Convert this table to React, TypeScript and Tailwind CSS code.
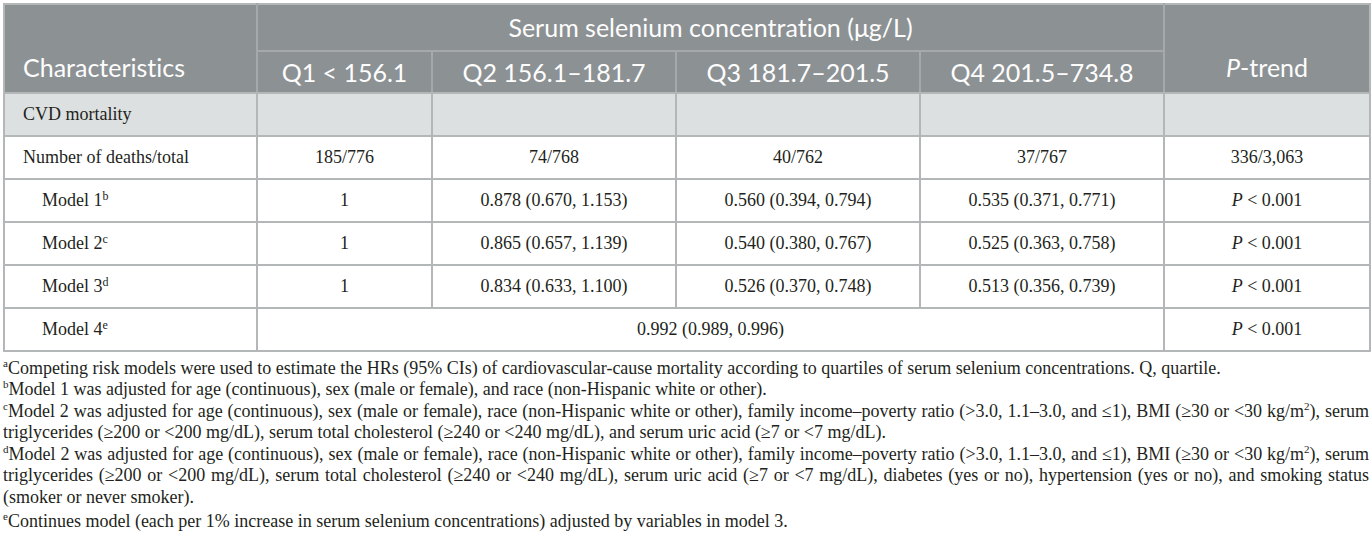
import React from 'react';

const cols = ['Q1 < 156.1', 'Q2 156.1–181.7', 'Q3 181.7–201.5', 'Q4 201.5–734.8'];

const rows = [
  { label: 'Model 1', sup: 'b', vals: ['1', '0.878 (0.670, 1.153)', '0.560 (0.394, 0.794)', '0.535 (0.371, 0.771)'] },
  { label: 'Model 2', sup: 'c', vals: ['1', '0.865 (0.657, 1.139)', '0.540 (0.380, 0.767)', '0.525 (0.363, 0.758)'] },
  { label: 'Model 3', sup: 'd', vals: ['1', '0.834 (0.633, 1.100)', '0.526 (0.370, 0.748)', '0.513 (0.356, 0.739)'] },
];

const td = 'border-2 border-[#b4b7b8] h-[43px] text-center align-middle';
const fsup = 'text-[11px] leading-none align-top';

function PLess() {
  return (
    <span>
      <i>P</i> &lt; 0.001
    </span>
  );
}

function Note({ s, children }: { s: string; children: React.ReactNode }) {
  return (
    <p className="text-justify">
      <span className={fsup}>{s}</span>
      {children}
    </p>
  );
}

export default function App() {
  return (
    <div className="bg-white w-[1372px] h-[553px] pt-[3px] pl-[3px] text-[#231f20] font-['Liberation_Serif',serif]">
      <table className="w-[1366px] border-collapse table-fixed text-[18px]">
        <colgroup>
          <col className="w-[253px]" />
          <col className="w-[175px]" />
          <col className="w-[244px]" />
          <col className="w-[244px]" />
          <col className="w-[244px]" />
          <col className="w-[206px]" />
        </colgroup>
        <thead className="bg-[#8c9194] text-[#fdfdfd] font-['Lato',sans-serif] text-[25px] [font-variant-ligatures:none]">
          <tr className="h-[47px]">
            <th rowSpan={2} className="border-2 border-[#b4b7b8] border-r-[#a5a9ab] font-normal text-left align-bottom pl-[18px] pb-[5px]">
              Characteristics
            </th>
            <th colSpan={4} className="border-2 border-[#b4b7b8] border-b-[#a5a9ab] border-x-[#a5a9ab] font-normal align-middle">
              Serum selenium concentration (μg/L)
            </th>
            <th rowSpan={2} className="border-2 border-[#b4b7b8] border-l-[#a5a9ab] font-normal align-bottom pb-[5px]">
              <i>P</i>-trend
            </th>
          </tr>
          <tr className="h-[41px]">
            {cols.map((c) => (
              <th key={c} className="border-2 border-[#a5a9ab] border-b-[#b4b7b8] font-normal align-middle pt-[2px]">
                {c}
              </th>
            ))}
          </tr>
        </thead>
        <tbody>
          <tr className="bg-[#dde0e1]">
            <td className={td + ' text-left pl-[18px] h-[42px]'}>CVD mortality</td>
            <td className={td} />
            <td className={td} />
            <td className={td} />
            <td className={td} />
            <td className={td} />
          </tr>
          <tr>
            <td className={td + ' text-left pl-[18px]'}>Number of deaths/total</td>
            <td className={td}>185/776</td>
            <td className={td}>74/768</td>
            <td className={td}>40/762</td>
            <td className={td}>37/767</td>
            <td className={td}>336/3,063</td>
          </tr>
          {rows.map((r) => (
            <tr key={r.label}>
              <td className={td + ' text-left pl-[37px]'}>
                {r.label}
                <sup className="text-[12px]">{r.sup}</sup>
              </td>
              {r.vals.map((v, i) => (
                <td key={i} className={td}>
                  {v}
                </td>
              ))}
              <td className={td}>
                <PLess />
              </td>
            </tr>
          ))}
          <tr>
            <td className={td + ' text-left pl-[37px] h-[42px]'}>
              Model 4<sup className="text-[12px]">e</sup>
            </td>
            <td colSpan={4} className={td + ' h-[42px]'}>
              0.992 (0.989, 0.996)
            </td>
            <td className={td + ' h-[42px]'}>
              <PLess />
            </td>
          </tr>
        </tbody>
      </table>
      <div className="w-[1366px] mt-[6px] text-[18px] leading-[21.6px]">
        <Note s="a">
          Competing risk models were used to estimate the HRs (95% CIs) of cardiovascular-cause mortality according to quartiles of serum selenium concentrations. Q, quartile.
        </Note>
        <Note s="b">
          Model 1 was adjusted for age (continuous), sex (male or female), and race (non-Hispanic white or other).
        </Note>
        <Note s="c">
          Model 2 was adjusted for age (continuous), sex (male or female), race (non-Hispanic white or other), family income–poverty ratio (&gt;3.0, 1.1–3.0, and ≤1), BMI (≥30 or &lt;30 kg/m<span className={fsup}>2</span>), serum triglycerides (≥200 or &lt;200 mg/dL), serum total cholesterol (≥240 or &lt;240 mg/dL), and serum uric acid (≥7 or &lt;7 mg/dL).
        </Note>
        <Note s="d">
          Model 2 was adjusted for age (continuous), sex (male or female), race (non-Hispanic white or other), family income–poverty ratio (&gt;3.0, 1.1–3.0, and ≤1), BMI (≥30 or &lt;30 kg/m<span className={fsup}>2</span>), serum triglycerides (≥200 or &lt;200 mg/dL), serum total cholesterol (≥240 or &lt;240 mg/dL), serum uric acid (≥7 or &lt;7 mg/dL), diabetes (yes or no), hypertension (yes or no), and smoking status (smoker or never smoker).
        </Note>
        <div className="mt-[2px]">
          <Note s="e">
            Continues model (each per 1% increase in serum selenium concentrations) adjusted by variables in model 3.
          </Note>
        </div>
      </div>
    </div>
  );
}
